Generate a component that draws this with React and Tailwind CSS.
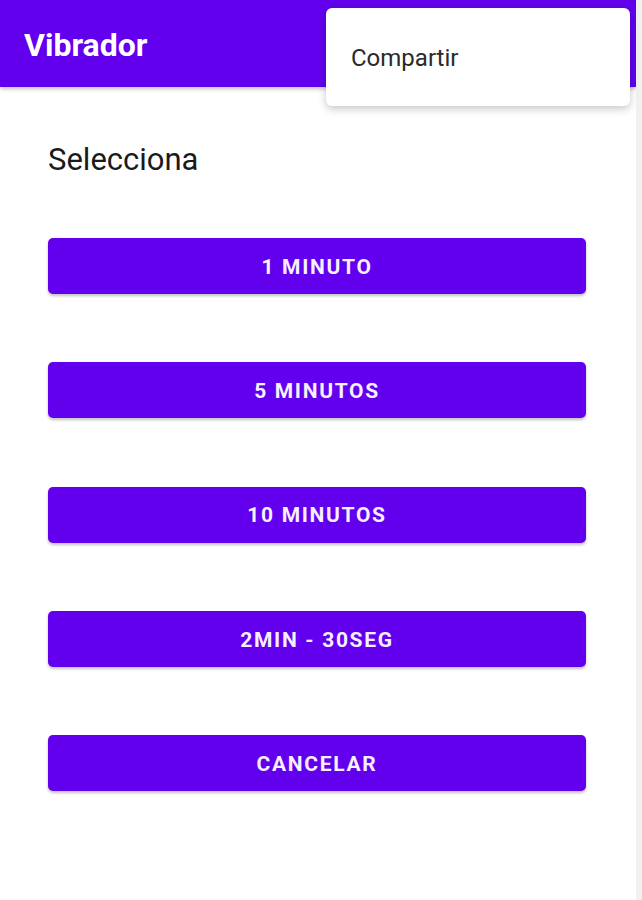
import React from "react";

const buttons = ["1 MINUTO", "5 MINUTOS", "10 MINUTOS", "2MIN - 30SEG", "CANCELAR"];

export default function App() {
  return (
    <div className="relative flex w-[642px] h-[900px] bg-white" style={{ fontFamily: "Roboto, 'Noto Sans', sans-serif" }}>
      <div className="flex-1 flex flex-col">
        <header className="h-[87px] bg-[#6200ee] flex items-center pl-6 pt-[3px] shadow-[0_2px_4px_rgba(0,0,0,0.25)]">
          <h1 className="text-white text-[32px] font-bold leading-none">Vibrador</h1>
        </header>
        <main className="flex flex-col pl-12 pr-[50px] pt-[56px]">
          <p className="text-[31px] leading-[34px] text-[#1a1a1a] mb-[61px]">Selecciona</p>
          <div className="flex flex-col gap-[68.25px]">
            {buttons.map((b) => (
              <button
                key={b}
                className="h-[56px] w-full pt-[3px] rounded-[5px] bg-[#6200ee] text-[#f6f0ff] text-[21px] font-bold tracking-[0.08em] shadow-[0_2px_3px_rgba(0,0,0,0.25)]"
              >
                {b}
              </button>
            ))}
          </div>
        </main>
      </div>
      <div className="w-[6px] bg-[#f1f1f1]" />
      <div className="absolute left-[326px] top-[8px] w-[304px] h-[98px] bg-white rounded-[6px] shadow-[0_3px_8px_rgba(0,0,0,0.22)] flex items-center pl-[25px] pt-[2px]">
        <span className="text-[24px] text-[#2a2a2a]">Compartir</span>
      </div>
    </div>
  );
}
